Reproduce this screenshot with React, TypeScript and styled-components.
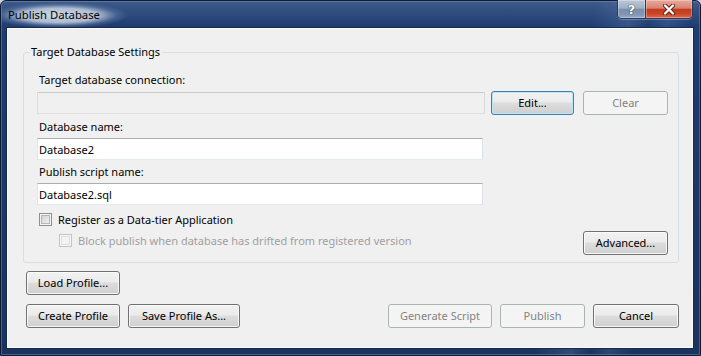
import React from 'react';
import styled, { createGlobalStyle, css } from 'styled-components';

const GlobalStyle = createGlobalStyle`
  html, body {
    margin: 0;
    padding: 0;
  }
  body {
    background: #cfd3d8;
    font-family: 'Noto Sans', 'DejaVu Sans', sans-serif;
    font-size: 11px;
    color: #000;
  }
  * {
    box-sizing: border-box;
  }
`;

// window frame
const Window = styled.div`
  width: 701px;
  height: 356px;
  display: flex;
  flex-direction: column;
  padding: 0 7px 7px 6px;
  border: 1px solid #0d1b33;
  border-radius: 6px 6px 0 0;
  background:
    linear-gradient(100deg, transparent 78%, rgba(130, 160, 210, 0.22) 83%, transparent 85.5%, rgba(130, 160, 210, 0.18) 88%, transparent 91%),
    linear-gradient(180deg, #3d5a89 0%, #1f3d71 7%, #1c3869 45%, #1a3360 100%);
  box-shadow: inset 0 0 0 1px rgba(150, 175, 215, 0.35);
`;

const TitleBar = styled.div`
  height: 27px;
  flex-shrink: 0;
  display: flex;
  align-items: flex-start;
  justify-content: space-between;
`;

// soft glow behind the caption text
const TitleText = styled.div`
  margin-left: -6px;
  padding: 6px 40px 0 7px;
  height: 26px;
  font-size: 11.3px;
  line-height: 16px;
  color: #000;
  background: radial-gradient(ellipse 50% 50% at 42% 55%, rgba(214, 222, 233, 0.97) 0%, rgba(196, 208, 224, 0.85) 55%, rgba(120, 145, 182, 0.35) 82%, rgba(60, 90, 140, 0) 100%);
`;

const CaptionGroup = styled.div`
  display: flex;
  height: 19px;
  margin-top: -1px;
  border: 1px solid #29395a;
  border-top: none;
  border-radius: 0 0 5px 5px;
  overflow: hidden;
  box-shadow: 0 1px 0 rgba(190, 205, 230, 0.35);
`;

const CaptionButton = styled.div<{ $close?: boolean }>`
  width: ${p => (p.$close ? 47 : 27)}px;
  display: flex;
  align-items: center;
  justify-content: center;
  box-shadow: inset 0 0 0 1px rgba(255, 255, 255, 0.3);
  background: ${p =>
    p.$close
      ? 'linear-gradient(180deg, #e8ab9b 0%, #d88470 45%, #c43b1d 52%, #c94426 75%, #dc6a4c 100%)'
      : 'linear-gradient(180deg, #bcc7d6 0%, #9fb0c6 45%, #7a8fad 52%, #8197b5 80%, #95aac6 100%)'};

  & + & {
    border-left: 1px solid #29395a;
  }
`;

const HelpGlyph = styled.span`
  font-family: 'DejaVu Sans', sans-serif;
  font-weight: bold;
  font-size: 13px;
  line-height: 13px;
  color: #fff;
  text-shadow: 0 0 1px #1f2d45, 0 0 1px #1f2d45;
`;

// client area
const Client = styled.div`
  flex: 1;
  display: flex;
  flex-direction: column;
  background: #f0f0f0;
  border: 1px solid #fbfbfb;
  box-shadow: 0 0 0 1px #172a4a;
  padding: 15px 13px 0 15px;
`;

const GroupBox = styled.fieldset`
  margin: 0;
  padding: 0;
  min-width: 0;
  border: 1px solid #d5dfe5;
  border-radius: 3px;
`;

const GroupLegend = styled.legend`
  margin-left: 5px;
  padding: 0 2px;
  line-height: 16px;
`;

const GroupInner = styled.div`
  display: flex;
  flex-direction: column;
  padding: 0 10px 7px 13px;
`;

const FieldLabel = styled.div<{ $gap: number }>`
  margin-top: ${p => p.$gap}px;
  padding-left: 2px;
  height: 16px;
  line-height: 16px;
`;

const Row = styled.div<{ $gap: number; $align?: string; $spread?: boolean }>`
  display: flex;
  align-items: ${p => p.$align ?? 'center'};
  justify-content: ${p => (p.$spread ? 'space-between' : 'flex-start')};
  margin-top: ${p => p.$gap}px;
`;

const TextBox = styled.input<{ $width: number; $readOnlyLook?: boolean }>`
  display: block;
  width: ${p => p.$width}px;
  height: 22px;
  margin: 3px 0 0;
  padding: 0 1px;
  font: inherit;
  color: #000;
  background: #fff;
  border: 1px solid;
  border-color: #abadb3 #dbdfe6 #e3e9ef #e2e3ea;
  border-radius: 1px;
  outline: none;

  ${p =>
    p.$readOnlyLook &&
    css`
      margin: 0 6px 0 0;
      background: #f0f0f0;
      border-color: #c9c9c9 #dadada #dedede #dadada;
    `}
`;

const Button = styled.button<{ $width: number; $primary?: boolean; $offset?: number }>`
  width: ${p => p.$width}px;
  height: 24px;
  margin-left: ${p => p.$offset ?? 0}px;
  padding: 0 0 1px;
  font: inherit;
  color: #000;
  border: 1px solid #707070;
  border-radius: 3px;
  background: linear-gradient(180deg, #f2f2f2 0%, #ebebeb 46%, #dddddd 50%, #cfcfcf 100%);
  box-shadow: inset 0 0 0 1px rgba(252, 252, 252, 0.9);

  ${p =>
    p.$primary &&
    css`
      border-color: #3c7fb1;
      box-shadow: inset 0 0 0 1px #bfe5fa;
    `}

  &:disabled {
    color: #838383;
    border-color: #adb2b5;
    background: #f4f4f4;
    box-shadow: none;
  }
`;

const CheckItem = styled.label<{ $disabled?: boolean; $indent?: number; $top?: number }>`
  display: flex;
  align-items: center;
  height: 16px;
  margin-left: ${p => p.$indent ?? 2}px;
  margin-top: ${p => p.$top ?? 0}px;
  color: ${p => (p.$disabled ? '#a0a0a0' : '#000')};
  gap: 6px;
`;

const CheckBox = styled.span<{ $disabled?: boolean }>`
  width: 13px;
  height: 13px;
  flex-shrink: 0;
  border: 1px solid ${p => (p.$disabled ? '#c4c4c4' : '#8e8f8f')};
  background: ${p =>
    p.$disabled ? '#f3f3f3' : 'linear-gradient(135deg, #c9cacb 0%, #e6e6e6 60%, #f7f7f7 100%)'};
  box-shadow: ${p =>
    p.$disabled
      ? 'inset 0 0 0 1px #f7f7f7, inset 0 0 0 2px #dedede'
      : 'inset 0 0 0 1px #f4f4f4, inset 0 0 0 2px #b4b6b8'};
`;

const ButtonRow = styled.div<{ $gap: number }>`
  display: flex;
  justify-content: space-between;
  margin-top: ${p => p.$gap}px;
  padding-left: 3px;
`;

const ButtonGroup = styled.div`
  display: flex;
  gap: 8px;
`;

const CloseGlyph = () => (
  <svg width="14" height="11" viewBox="0 0 14 11">
    <path d="M3 1.5 L11 9.5 M11 1.5 L3 9.5" stroke="#5a1c10" strokeWidth="4" strokeLinecap="round" />
    <path d="M3 1.5 L11 9.5 M11 1.5 L3 9.5" stroke="#ffffff" strokeWidth="2.4" strokeLinecap="round" />
  </svg>
);

const App: React.FC = () => {
  return (
    <>
      <GlobalStyle />
      <Window>
        <TitleBar>
          <TitleText>Publish Database</TitleText>
          <CaptionGroup>
            <CaptionButton>
              <HelpGlyph>?</HelpGlyph>
            </CaptionButton>
            <CaptionButton $close>
              <CloseGlyph />
            </CaptionButton>
          </CaptionGroup>
        </TitleBar>

        <Client>
          <GroupBox>
            <GroupLegend>Target Database Settings</GroupLegend>
            <GroupInner>
              <FieldLabel $gap={12}>Target database connection:</FieldLabel>
              <Row $gap={3}>
                <TextBox $width={448} $readOnlyLook readOnly value="" />
                <Button $width={83} $primary>Edit...</Button>
                <Button $width={85} $offset={9} disabled>Clear</Button>
              </Row>

              <FieldLabel $gap={4}>Database name:</FieldLabel>
              <TextBox $width={446} readOnly value="Database2" />

              <FieldLabel $gap={4}>Publish script name:</FieldLabel>
              <TextBox $width={446} readOnly value="Database2.sql" />

              <Row $gap={6}>
                <CheckItem>
                  <CheckBox />
                  Register as a Data-tier Application
                </CheckItem>
              </Row>
              <Row $gap={4} $align="flex-start" $spread>
                <CheckItem $disabled $indent={22} $top={1}>
                  <CheckBox $disabled />
                  Block publish when database has drifted from registered version
                </CheckItem>
                <Button $width={85}>Advanced...</Button>
              </Row>
            </GroupInner>
          </GroupBox>

          <ButtonRow $gap={8}>
            <Button $width={94}>Load Profile...</Button>
          </ButtonRow>
          <ButtonRow $gap={9}>
            <ButtonGroup>
              <Button $width={94}>Create Profile</Button>
              <Button $width={112}>Save Profile As...</Button>
            </ButtonGroup>
            <ButtonGroup>
              <Button $width={104} disabled>Generate Script</Button>
              <Button $width={85} disabled>Publish</Button>
              <Button $width={86}>Cancel</Button>
            </ButtonGroup>
          </ButtonRow>
        </Client>
      </Window>
    </>
  );
};

export default App;
